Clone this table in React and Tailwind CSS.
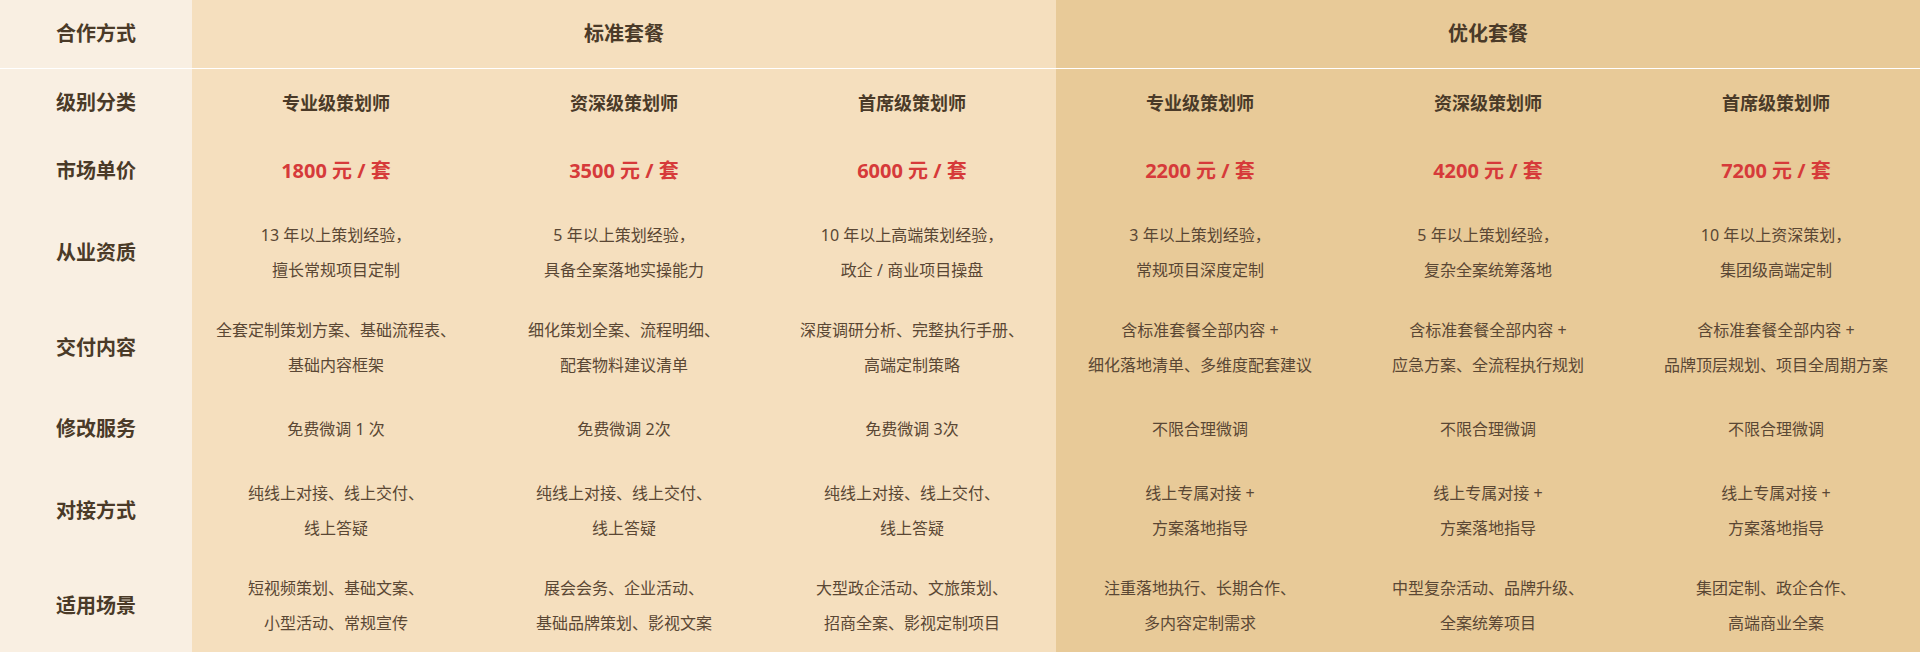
import React from "react";

const std = "bg-[#f5dfbe]";
const opt = "bg-[#e8ca98]";
const lab = "bg-[#f9efe2]";

const levels = ["专业级策划师", "资深级策划师", "首席级策划师", "专业级策划师", "资深级策划师", "首席级策划师"];
const prices = ["1800 元 / 套", "3500 元 / 套", "6000 元 / 套", "2200 元 / 套", "4200 元 / 套", "7200 元 / 套"];

const rows = [
  {
    label: "从业资质",
    h: "h-[95px]",
    cells: [
      ["13 年以上策划经验，", "擅长常规项目定制"],
      ["5 年以上策划经验，", "具备全案落地实操能力"],
      ["10 年以上高端策划经验，", "政企 / 商业项目操盘"],
      ["3 年以上策划经验，", "常规项目深度定制"],
      ["5 年以上策划经验，", "复杂全案统筹落地"],
      ["10 年以上资深策划，", "集团级高端定制"],
    ],
  },
  {
    label: "交付内容",
    h: "h-[95px]",
    cells: [
      ["全套定制策划方案、基础流程表、", "基础内容框架"],
      ["细化策划全案、流程明细、", "配套物料建议清单"],
      ["深度调研分析、完整执行手册、", "高端定制策略"],
      ["含标准套餐全部内容 +", "细化落地清单、多维度配套建议"],
      ["含标准套餐全部内容 +", "应急方案、全流程执行规划"],
      ["含标准套餐全部内容 +", "品牌顶层规划、项目全周期方案"],
    ],
  },
  {
    label: "修改服务",
    h: "h-[68px]",
    cells: [
      ["免费微调 1 次"],
      ["免费微调 2次"],
      ["免费微调 3次"],
      ["不限合理微调"],
      ["不限合理微调"],
      ["不限合理微调"],
    ],
  },
  {
    label: "对接方式",
    h: "h-[95px]",
    cells: [
      ["纯线上对接、线上交付、", "线上答疑"],
      ["纯线上对接、线上交付、", "线上答疑"],
      ["纯线上对接、线上交付、", "线上答疑"],
      ["线上专属对接 +", "方案落地指导"],
      ["线上专属对接 +", "方案落地指导"],
      ["线上专属对接 +", "方案落地指导"],
    ],
  },
  {
    label: "适用场景",
    h: "h-[95px]",
    cells: [
      ["短视频策划、基础文案、", "小型活动、常规宣传"],
      ["展会会务、企业活动、", "基础品牌策划、影视文案"],
      ["大型政企活动、文旅策划、", "招商全案、影视定制项目"],
      ["注重落地执行、长期合作、", "多内容定制需求"],
      ["中型复杂活动、品牌升级、", "全案统筹项目"],
      ["集团定制、政企合作、", "高端商业全案"],
    ],
  },
];

function Label({ children, h }) {
  return (
    <div className={`${lab} ${h} flex items-center justify-center text-[20px] font-bold text-[#4a3a28]`}>
      {children}
    </div>
  );
}

export default function App() {
  return (
    <div
      className="w-[1920px] grid grid-cols-[192px_repeat(6,288px)]"
      style={{ fontFamily: '"Noto Sans", "Noto Sans CJK SC", sans-serif' }}
    >
      <Label h="h-[68px]">合作方式</Label>
      <div className={`${std} col-span-3 h-[68px] flex items-center justify-center text-[20px] font-bold text-[#4a3a28]`}>
        标准套餐
      </div>
      <div className={`${opt} col-span-3 h-[68px] flex items-center justify-center text-[20px] font-bold text-[#4a3a28]`}>
        优化套餐
      </div>
      <div className="col-span-7 h-px bg-white" />

      <Label h="h-[68px]">级别分类</Label>
      {levels.map((t, i) => (
        <div
          key={"l" + i}
          className={`${i < 3 ? std : opt} h-[68px] flex items-center justify-center text-[18px] font-bold text-[#4a3a28]`}
        >
          {t}
        </div>
      ))}

      <Label h="h-[68px]">市场单价</Label>
      {prices.map((t, i) => (
        <div
          key={"p" + i}
          className={`${i < 3 ? std : opt} h-[68px] flex items-center justify-center text-[20px] font-bold text-[#d63a3a]`}
        >
          {t}
        </div>
      ))}

      {rows.map((r) => (
        <React.Fragment key={r.label}>
          <Label h={r.h}>{r.label}</Label>
          {r.cells.map((lines, i) => (
            <div
              key={r.label + i}
              className={`${i < 3 ? std : opt} ${r.h} flex flex-col items-center justify-center text-[16px] leading-[35px] text-[#5a4734]`}
            >
              {lines.map((ln, j) => (
                <div key={j}>{ln}</div>
              ))}
            </div>
          ))}
        </React.Fragment>
      ))}
    </div>
  );
}
